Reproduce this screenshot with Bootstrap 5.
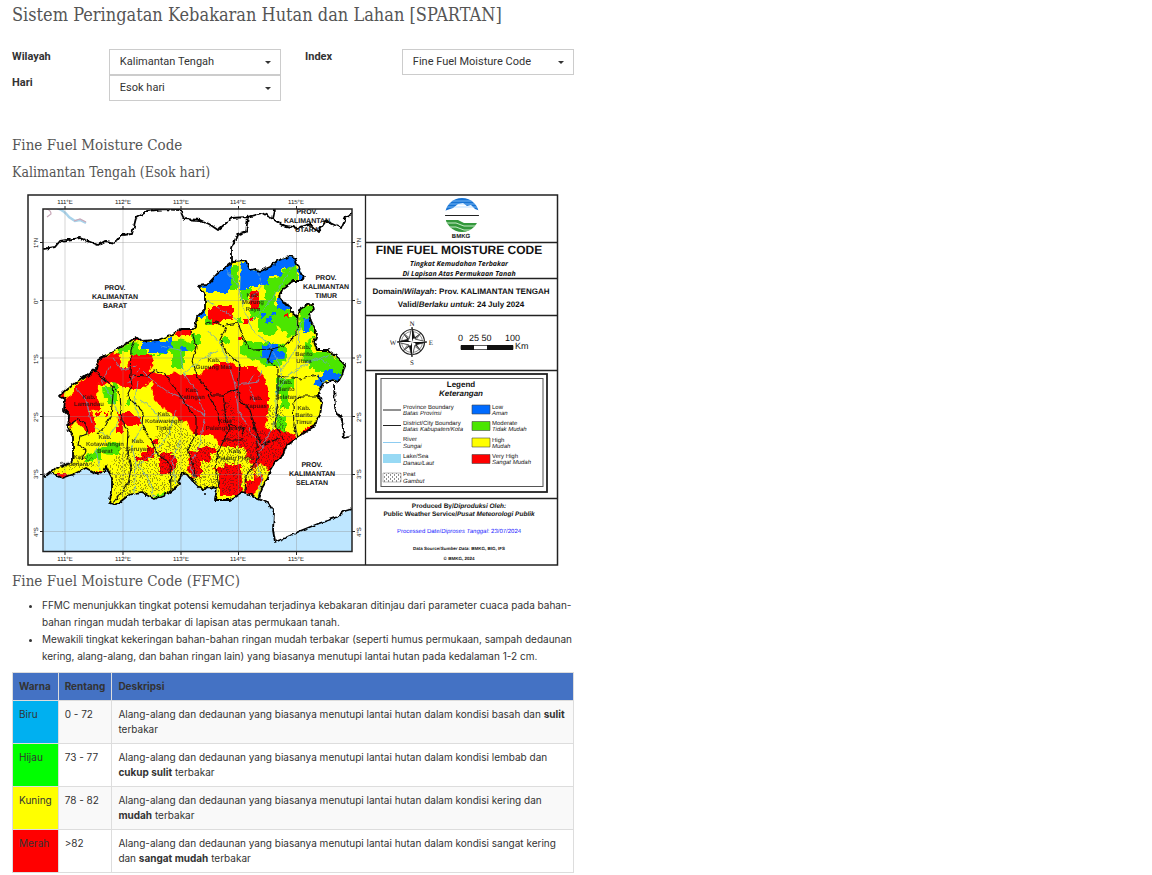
<!DOCTYPE html>
<html lang="id">
<head>
<meta charset="utf-8">
<meta name="viewport" content="width=device-width, initial-scale=1">
<title>Sistem Peringatan Kebakaran Hutan dan Lahan [SPARTAN]</title>
<link href="https://cdn.jsdelivr.net/npm/bootstrap@5.3.0/dist/css/bootstrap.min.css" rel="stylesheet">
<style>
body{font-family:Roboto,"Liberation Sans",sans-serif;font-size:11px;line-height:15px;color:#333;background:#fff}
.spartan{width:50%;min-width:520px;padding:4px 2px 2px 12px}
.spartan h1,.spartan h2,.spartan h3{font-family:"Roboto Slab","DejaVu Serif Condensed","DejaVu Serif",serif;font-weight:400;color:#555;margin:0}
.spartan h1{font-size:18px;line-height:22px;margin-bottom:23px}
.spartan h2{font-size:15px;line-height:20px}
.spartan h3{font-size:14px;line-height:20px;margin-top:7px}
.filters{margin-bottom:34px}
.filter-label{flex:0 0 36%;font-weight:700;line-height:15px}
.filters .form-select{height:26px;padding:0 24px 1px 10px;border:1px solid #ccc;border-radius:0;color:#333;font-size:11px;line-height:15px;
background-image:url("data:image/svg+xml,%3Csvg xmlns='http://www.w3.org/2000/svg' viewBox='0 0 6 3'%3E%3Cpath d='M0 0h6L3 3z' fill='%23333'/%3E%3C/svg%3E");background-size:6px 3px;background-position:right 9px center}
.map-figure{display:block;width:100%;height:auto;margin:6px 0 1px}
.notes,.range-table{font-family:Inter,Roboto,sans-serif;font-size:10px}
.notes{padding-left:30px;line-height:17px;margin:6px 0 7px}
.range-table{line-height:15px;margin:0;color:#333;border-color:#ddd;--bs-table-color:#333;--bs-table-striped-color:#333;--bs-table-striped-bg:#f9f9f9}
.range-table>:not(caption)>*>*{padding:6px;border-color:#ddd;color:#333}
.range-table thead th{background:#4472c4;font-weight:700}
.range-table thead th:nth-child(1){width:45px}
.range-table thead th:nth-child(2){width:53px}
.range-table tbody td.swatch-blue{background:#00b0f0;box-shadow:none}
.range-table tbody td.swatch-green{background:#0f0;box-shadow:none}
.range-table tbody td.swatch-yellow{background:#ff0;box-shadow:none}
.range-table tbody td.swatch-red{background:#f00;box-shadow:none}
.map-figure{text-rendering:geometricPrecision}
.map-figure text{font-family:"Liberation Sans",sans-serif;fill:#111}
.map-figure .grat{font-size:6px}
.map-figure .prov{font-size:7px;font-weight:700;text-anchor:middle}
.map-figure .kab{font-size:6px;font-weight:700;text-anchor:middle;opacity:.75}
.map-figure .mid{text-anchor:middle}
.map-figure .leg{font-size:6px}
.map-figure .bi{font-weight:700;font-style:italic}
.map-figure .it{font-style:italic}
.map-figure .bo{font-weight:700}
.map-figure .subtitle{font-family:"Open Sans",sans-serif;font-size:7px;font-weight:700;font-style:italic}
.map-figure .compass{font-family:"Liberation Serif",serif;font-size:7px}
</style>
</head>
<body>
<main class="spartan">
<h1>Sistem Peringatan Kebakaran Hutan dan Lahan [SPARTAN]</h1>
<form class="filters row gx-4">
<div class="col-6">
<div class="d-flex"><label class="filter-label" for="wilayah">Wilayah</label><select id="wilayah" class="form-select"><option>Kalimantan Tengah</option></select></div>
<div class="d-flex"><label class="filter-label" for="hari">Hari</label><select id="hari" class="form-select"><option>Esok hari</option></select></div>
</div>
<div class="col-6">
<div class="d-flex"><label class="filter-label" for="index">Index</label><select id="index" class="form-select"><option>Fine Fuel Moisture Code</option></select></div>
</div>
</form>
<h2>Fine Fuel Moisture Code</h2>
<h3>Kalimantan Tengah (Esok hari)</h3>

<svg class="map-figure" viewBox="12 188 562 382" role="img" aria-label="Peta Fine Fuel Moisture Code Kalimantan Tengah">
<defs>
<path id="province" d="M230 264L233 262 246 261 250 270 254 269 260 271 270 267 277 261 290 256 295 258 297 265 299 269 304 277 302 281 293 281 285 287 279 296 285 304 291 307 291 312 297 317 299 310 307 305 313 304 314 309 309 314 311 322 317 334 314 342 317 350 328 350 337 357 345 365 342 375 338 382 333 380 323 383 318 395 322 403 320 415 313 427 297 438 285 447 283 455 275 462 270 470 268 478 262 488 258 499 252 495 242 492 230 500 215 500 217 488 207 487 203 491 195 483 190 477 183 473 178 482 180 485 169 493 154 499 141 492 129 495 116 505 109 503 112 492 112 478 106 466 104 472 97 474 86 468 74 474 63 478 51 472 56 468 73 462 73 438 68 428 69 415 64 410 65 399 59 396 68 388 79 380 86 375 83 379 96 369 98 360 106 355 119 348 129 342 136 337 141 341 158 340 173 334 181 329 193 329 195 327 197 317 205 309 205 294 198 286 207 285 217 274Z"/>
<clipPath id="province-clip"><use href="#province"/></clipPath>
<clipPath id="map-clip"><path d="M43 209H352V552H43Z"/></clipPath>
<pattern id="peat" width="4" height="4" patternUnits="userSpaceOnUse"><path d="M0 1h1M2 3h1" stroke="#222" stroke-width="1"/></pattern>
<filter id="rough" color-interpolation-filters="sRGB" filterUnits="userSpaceOnUse" x="12" y="188" width="562" height="382"><feTurbulence type="fractalNoise" baseFrequency=".22" numOctaves="2" seed="4" result="n"/><feDisplacementMap in="SourceGraphic" in2="n" scale="6" xChannelSelector="R" yChannelSelector="G"/></filter>
<filter id="wiggle" color-interpolation-filters="sRGB" filterUnits="userSpaceOnUse" x="12" y="188" width="562" height="382"><feTurbulence type="fractalNoise" baseFrequency=".2" numOctaves="2" seed="9" result="n"/><feDisplacementMap in="SourceGraphic" in2="n" scale="4" xChannelSelector="R" yChannelSelector="G"/></filter>
</defs>
<rect x="28" y="195" width="529.500" height="370" fill="#fff" stroke="#222" stroke-width="1.500"/>
<g clip-path="url(#map-clip)">
<!-- sea -->
<path fill="#bee6ff" d="M43 475L46 476 51 472 63 478 74 474 86 468 97 474 104 472 106 466 112 478 112 492 109 503 116 505 129 495 141 492 154 499 169 493 180 485 178 482 183 473 195 483 203 491 207 487 217 488 215 500 230 500 242 492 252 495 258 499 268 503 274 510 274 530 275 542 280 540 297 532 318 523 340 516 345 511 352 509V552H43Z"/>
<path d="M57 208q8 3 12 9l6 4 5-1 6 3" fill="none" stroke="#a9d3ea" stroke-width="2.500"/>
<path d="M46 209q5 1 5 5l-4 3M74 221l6-2 6 3" fill="none" stroke="#c9a9b9" stroke-width="1.200"/>
<g clip-path="url(#province-clip)">
<rect x="43" y="250" width="309" height="265" fill="#ff0"/>
<g filter="url(#rough)">
<g fill="#4be600">
<path d="M231 266h7v24h-7zM240 288h12v6h-4v6h-8zM265 278h12l6-5 4-10h10v17l-8 4-14 10v12l8 1 7 4v6h8v14h-17l-4-6-2 10h-11v-3h-6v-14h-6v-12h6v-6h8v-10h-1zM250 312h6v6h-6z"/>
<path d="M243 342h30l14 4v14l-10 6h-14l-3-4-12-4-8-4v-8h3zM300 308l11-4 2 12 2 16h-8l-8-4zM305 352h22l20 14-4 14-6 2-6-10h-16v-4h-6v-6h-6zM317 336h-6v16h-6v-10z"/>
<path d="M192 334h9v10h-9zM205 317h9v7h-9zM237 317h5v6h-5zM221 337h8v6h-8zM286 330l10-6v10l-8 4z"/>
<path d="M120 348l6-3 4-4 8 2v6h8v5h20v-13h12v-2l16 4v8h-10v17h-12v-17h-12v4h-30v-4h-8v4h-8zM103 387h9v-5h6v8h-1v14h-9v-6h-4zM101 446h6v-3h13v12h-10l-9-2v6h-8v3h-8v-7l8-2zM126 400h5v4h-5zM154 496l12-4v6l-12 4z"/>
<path d="M276 378h18v10h-5v20h-8v-14h-5zM276 416h10v16h-9z"/>
</g>
<g fill="#006bff">
<path d="M196 280h12l14-18h9v28h-3v3h-7v-1h-14v-4h-10zM241 262h7l6 8 16-3 10-9 17-2v8l-9 4h-6v8h-14v8h-10v3h-12v3h-6zM298 266h8v14h-8zM277 298h8l2 7h5v4h-15zM198 310h7v7h-9zM142 342h26v-6h4v11h-4v6h-20v-4h-6zM181 346h6v5h-6zM304 318h6v15h-6zM262 346h6v-3h10v9h7l-3 7h-8v4h-8v-6h-5zM318 376h6v-6h8v4h8v7l-6-1h-8l-6 6h-6zM266 318h6v5h-6zM271 312h5v4h-5zM261 313h4v4h-4z"/>
</g>
<g fill="#f00">
<path d="M213 306h20v14h-13v5h-8v-6h-4v-11h5zM250 291h9v18h-9zM243 319h5v5h-5zM250 318h3v4h-3zM284 314h4v3h-4zM132 334h8v6h-8zM174 329h17v6h-16zM237 337h4v3h-4z"/>
<path d="M56 396L64 393 66 399 75 392V386L97 368 100 358 117 352 120 357 122 368H128L131 355H150L154 362 148 371 160 374H172L174 371 180 375H200L202 370 210 367 220 362H230L237 367H257L263 375 268 388V415L265 430 280 430 297 436 285 457 262 475 258 462 247 457 245 447H220L213 435H193L187 422 173 415 160 406 154 400 152 388 153 380 143 388H122L120 384 112 382 98 385 97 397 100 405V410L90 411 95 418V432H88L77 422 70 428 60 415Z"/>
<path d="M300 432l14-8v6l-14 8zM117 413h16v4h8v8h-18v7h-8v-5h4zM104 412h4v3h-4zM96 412h5v3h-5zM138 365h8v8h-8z"/>
<path d="M190 451h8v-3h12v14h-9v16l-10-2-4-8zM160 452h12v4h4v10l-6 8h-10zM148 447h6v10h-6v4h-12v-4h5v-5h7zM206 447h10v6h-10zM220 472h22v24h-22zM213 468h12v-4h16v8h-26zM246 480h8v-8l-4-12 16-10-4 30-12 20-6-6zM50 474h18v6h-18zM94 472h8v4h-8zM152 440h6v4h-6z"/>
</g>
<path fill="#ff0" d="M241 470h6v10h-5zM254 468l6-4 8 4-4 6-8 4zM218 453h14v4h-14zM217 361h3v4h-3z"/>
</g>
<g filter="url(#rough)" opacity=".85">
<path fill="url(#peat)" d="M58 464L92 454 98 468 112 462 120 446 146 456 154 440 168 420 182 424 192 436 224 446 222 410 230 396 236 420 265 432 275 430 292 436 284 456 258 480 242 492 218 494 202 490 184 472 176 488 116 500 108 464 58 472zM266 405h20v30h-18z"/>
</g>
<!-- rivers -->
<g fill="none" stroke="#68a4c8" stroke-width=".8" filter="url(#wiggle)">
<path d="M258 496L262 480 256 462 262 448 250 430 238 410 235 385 229 365 221 345 208 330M262 448L276 420 276 395 282 370 270 345 252 330 244 310 238 285 226 270M252 320L268 305 284 280 292 266M276 395L288 375 310 362 332 355M282 370L298 345 300 325 309 315"/>
<path d="M197 482L190 465 200 444 205 415 196 390 184 374 180 350 160 346M187 400L168 392 152 380 140 368 128 384M205 415L182 402M184 374L200 360 218 350M238 385L258 382 262 370M255 402L248 384 254 374"/>
<path d="M100 470L96 450 108 438 120 420 112 398 102 382 110 366M134 492L136 465 132 445 143 425 134 405 138 382M154 497L148 478 138 465 156 452 168 435 176 410M108 438L92 424 86 400 76 388M176 488L172 460 180 440"/>
<path d="M237 320L222 310 206 300M250 300L262 285 258 272M140 400L152 408 160 422M113 358L122 370 136 366M330 366L318 358 306 362"/>
</g>
</g>
<!-- district boundaries -->
<g fill="none" stroke="#111" stroke-width="1.100" filter="url(#wiggle)">
<path d="M136 338L131 350 130 375 132 385 127 396 143 412 142 425 151 440 158 455 170 463 171 490M95 371L105 380 112 385 113 395 111 415 106 425 98 434M112 385L120 395 122 420 128 432 127 450 131 468 128 484 112 504M69 425L78 419 86 424 88 434 80 436 78 445 86 450 82 460M131 375L148 376 154 370 165 374 178 392 188 408 196 418V434L188 448 194 470 196 482"/>
<path d="M192 331L196 347 192 362 198 378 204 385 212 395 223 395 238 389 240 365 226 352 220 340 226 328 216 322 205 324M226 325L238 323 246 345 252 350 272 349 286 345 297 334 298 317M272 349L268 361 278 368 278 400 275 425 284 440M278 376L300 379 318 375 323 383M223 394L226 420 230 428 224 440H241L244 428 229 425M238 389L240 400 250 410 256 430 258 458 246 476 245 493M224 440L219 450 216 468 219 488M208 395L218 412 219 425M319 396L300 396 293 404 294 426 297 438M254 427L262 445 280 438"/>
</g>
<!-- graticule -->
<path d="M65 209V552M123 209V552M181 209V552M238.500 209V552M296.500 209V552M43 242.500H352M43 300.500H352M43 358H352M43 416.500H352M43 474.500H352M43 531.500H352" stroke="#888" stroke-width=".6" opacity=".6" fill="none"/>
<g fill="none" stroke="#000" stroke-linejoin="round">
<use href="#province" stroke-width="1.800" filter="url(#wiggle)"/>
<path stroke-width="1.800" filter="url(#wiggle)" d="M43 249L55 247 60 241 80 238 93 243 98 245 105 241 115 243 122 235 132 234 136 218 148 211 164 209 180 210 184 219 200 220 209 224 218 230 232 218 247 217 252 216 262 213 273 219 282 225 297 228 310 224 318 232 326 221 341 228 346 217 352 214M273 219L275 209M248 217L246 232 237 235 232 248 232 262M334 385L335 408 342 420 344 438 352 436M43 475L46 476 51 472M258 499L268 503 274 512 273 530 275 542 285 538 300 531 320 523 338 517 345 511 352 509"/>
</g>
<circle cx="205" cy="494" r="1"/>
<g class="prov">
<text x="115" y="290">PROV.</text><text x="115" y="299">KALIMANTAN</text><text x="115" y="308">BARAT</text>
<text x="307" y="214">PROV.</text><text x="307" y="223">KALIMANTAN</text><text x="307" y="232">UTARA</text>
<text x="326" y="280">PROV.</text><text x="326" y="289">KALIMANTAN</text><text x="326" y="298">TIMUR</text>
<text x="312" y="467">PROV.</text><text x="312" y="476">KALIMANTAN</text><text x="312" y="485">SELATAN</text>
</g>
<g class="kab">
<text x="253" y="297">Kab.</text><text x="253" y="304">Murung</text><text x="253" y="311">Raya</text>
<text x="304" y="349">Kab.</text><text x="304" y="356">Barito</text><text x="304" y="363">Utara</text>
<text x="214" y="362">Kab.</text><text x="214" y="369">Gunung Mas</text>
<text x="89" y="399">Kab.</text><text x="89" y="406">Lamandau</text>
<text x="192" y="392">Kab.</text><text x="192" y="399">Katingan</text>
<text x="256" y="400">Kab.</text><text x="256" y="408">Kapuas</text>
<text x="286" y="384">Kab.</text><text x="286" y="391">Barito</text><text x="286" y="399">Selatan</text>
<text x="304" y="410">Kab.</text><text x="304" y="417">Barito</text><text x="304" y="424">Timur</text>
<text x="164" y="416">Kab.</text><text x="164" y="423">Kotawaringin</text><text x="164" y="430">Timur</text>
<text x="105" y="439">Kab.</text><text x="105" y="446">Kotawaringin</text><text x="105" y="453">Barat</text>
<text x="138" y="443">Kab.</text><text x="138" y="451">Seruyan</text>
<text x="225" y="423">Kota</text><text x="225" y="430">Palangkaraya</text>
<text x="235" y="453">Kab.</text><text x="235" y="460">Pulang Pisau</text>
<text x="80" y="459">Kab.</text><text x="74" y="466">Sukamara</text>
</g>
</g>
<rect x="43" y="209" width="309" height="342.500" fill="none" stroke="#222" stroke-width="1.500"/>
<path d="M65 206v3M123 206v3M181 206v3M238.500 206v3M296.500 206v3M65 552v3M123 552v3M181 552v3M238.500 552v3M296.500 552v3M40 242.500h3M40 300.500h3M40 358h3M40 416.500h3M40 474.500h3M40 531.500h3M352 242.500h3M352 300.500h3M352 358h3M352 416.500h3M352 474.500h3M352 531.500h3" stroke="#222" fill="none"/>
<g class="grat mid">
<text x="65" y="204">111°E</text><text x="123" y="204">112°E</text><text x="181" y="204">113°E</text><text x="238" y="204">114°E</text><text x="296" y="204">115°E</text>
<text x="65" y="561">111°E</text><text x="123" y="561">112°E</text><text x="181" y="561">113°E</text><text x="238" y="561">114°E</text><text x="296" y="561">115°E</text>
<g><text transform="translate(38 243) rotate(-90)">1°N</text><text transform="translate(38 301) rotate(-90)">0°</text><text transform="translate(38 359) rotate(-90)">1°S</text><text transform="translate(38 417) rotate(-90)">2°S</text><text transform="translate(38 474) rotate(-90)">3°S</text><text transform="translate(38 532) rotate(-90)">4°S</text></g>
<g><text transform="translate(361 243) rotate(-90)">1°N</text><text transform="translate(361 301) rotate(-90)">0°</text><text transform="translate(361 359) rotate(-90)">1°S</text><text transform="translate(361 417) rotate(-90)">2°S</text><text transform="translate(361 474) rotate(-90)">3°S</text><text transform="translate(361 532) rotate(-90)">4°S</text></g>
</g>
<path d="M365.500 195V565M365 242.500H558M365 278.500H558M365 315.500H558M365 370.500H558M365 498.500H558" stroke="#222" stroke-width="1.300" fill="none"/>
<!-- BMKG emblem -->
<clipPath id="emblem-clip"><ellipse cx="462" cy="215" rx="17" ry="17"/></clipPath>
<g clip-path="url(#emblem-clip)">
<path fill="#1673d4" d="M444 198h36v13l-5-2-4-4-4 1-4-3-5 1-5 4-9 3z"/>
<path d="M444 201h36M444 204h36M444 207h36" stroke="#9fd0ff" stroke-width=".7"/>
<path d="M444 215.500h36" stroke="#222"/>
<path fill="#34983c" d="M444 220h14l6 3h16v10h-36z"/>
<path d="M444 223l12 0 8 3h16M444 227h12l8 3h16" stroke="#c6ecc8" fill="none"/>
</g>
<text class="mid bo" x="461" y="238" font-size="6">BMKG</text>
<g class="mid">
<text x="459" y="254" class="bo" font-size="12">FINE FUEL MOISTURE CODE</text>
<text x="459" y="266" class="subtitle">Tingkat Kemudahan Terbakar</text><text x="459" y="276" class="subtitle">Di Lapisan Atas Permukaan Tanah</text>
<text x="461" y="294" class="bo" font-size="8">Domain/<tspan font-style="italic">Wilayah</tspan>: Prov. KALIMANTAN TENGAH</text>
<text x="461" y="307" class="bo" font-size="8">Valid/<tspan font-style="italic">Berlaku untuk</tspan>: 24 July 2024</text>
</g>
<!-- compass rose -->
<g transform="translate(412 342)">
<circle r="12.500" fill="none" stroke="#222" stroke-width="1.200"/><circle r="10.500" fill="none" stroke="#444" stroke-width=".6"/>
<path fill="#fff" stroke="#222" stroke-width=".6" d="M-9-9L-1-3 0 0-3-1ZM9-9L1-3 0 0 3-1ZM9 9L1 3 0 0 3 1ZM-9 9L-1 3 0 0-3 1Z"/>
<path fill="#fff" stroke="#111" stroke-width=".7" d="M0-15L3-3 15 0 3 3 0 15-3 3-15 0-3-3Z"/>
<path fill="#111" d="M0-15V0L3-3ZM15 0H0L3 3ZM0 15V0L-3 3ZM-15 0H0L-3-3ZM-9-9L0 0-3-1ZM9-9L0 0 1-3ZM9 9L0 0 3 1ZM-9 9L0 0-1 3Z"/>
</g>
<g class="mid"><text class="compass" x="412" y="326">N</text><text class="compass" x="412" y="365">S</text><text class="compass" x="393" y="345">W</text><text class="compass" x="431" y="345">E</text></g>
<g font-size="9"><text x="458" y="341">0</text><text x="469" y="341">25 50</text><text x="505" y="341">100</text><text x="515" y="349">Km</text></g>
<path fill="#fff" stroke="#111" stroke-width=".7" d="M461 345.500h52v4h-52z"/><path fill="#111" d="M461 345h13v5h-13zM487 345h26v5h-26z"/>
<!-- legend -->
<rect x="376" y="374" width="171" height="118" fill="#fff" stroke="#222" stroke-width="1.800"/><rect x="381" y="378.500" width="162" height="108" fill="none" stroke="#555" stroke-width="1"/>
<text class="mid bo" x="461" y="387" font-size="8">Legend</text><text class="mid bi" x="461" y="396" font-size="8">Keterangan</text>
<path d="M383 410h18M383 425.500h18" stroke="#222"/><path d="M383 442.500h18" stroke="#8dccf1"/>
<path fill="#97d9f4" d="M383 454h18v9h-18z"/><path fill="url(#peat)" stroke="#777" stroke-width=".5" d="M383 473h18v9h-18z"/>
<g stroke="#444" stroke-width=".6"><path fill="#006bff" d="M472 405h18v9h-18z"/><path fill="#4be600" d="M472 421.500h18v9h-18z"/><path fill="#ff0" d="M472 438h18v9h-18z"/><path fill="#f00" d="M472 454.500h18v9h-18z"/></g>
<g class="leg">
<text x="403" y="409">Province Boundary</text><text x="403" y="415" class="it">Batas Provinsi</text>
<text x="403" y="425">District/City Boundary</text><text x="403" y="431" class="it">Batas Kabupaten/Kota</text>
<text x="403" y="441">River</text><text x="403" y="448" class="it">Sungai</text>
<text x="403" y="458">Lake/Sea</text><text x="403" y="465" class="it">Danau/Laut</text>
<text x="403" y="476">Peat</text><text x="403" y="483" class="it">Gambut</text>
<text x="492" y="409">Low</text><text x="492" y="415" class="it">Aman</text>
<text x="492" y="425">Moderate</text><text x="492" y="431" class="it">Tidak Mudah</text>
<text x="492" y="442">High</text><text x="492" y="448" class="it">Mudah</text>
<text x="492" y="458">Very High</text><text x="492" y="464" class="it">Sangat Mudah</text>
</g>
<g class="mid">
<text x="459" y="508" class="bo" font-size="6.500">Produced By/<tspan font-style="italic">Diproduksi Oleh:</tspan></text>
<text x="459" y="516" class="bo" font-size="6.500">Public Weather Service/<tspan font-style="italic">Pusat Meteorologi Publik</tspan></text>
<text x="459" y="533" font-size="6" style="fill:#22f">Processed Date/<tspan font-style="italic">Diproses Tanggal</tspan>: 23/07/2024</text>
<text x="459" y="550" class="bo" font-size="4.500">Data Source/<tspan font-style="italic">Sumber Data</tspan>: BMKG, BIG, IFS</text>
<text x="459" y="560" class="bo" font-size="4.500">© BMKG, 2024</text>
</g>
</svg>

<h2>Fine Fuel Moisture Code (FFMC)</h2>
<ul class="notes">
<li>FFMC menunjukkan tingkat potensi kemudahan terjadinya kebakaran ditinjau dari parameter cuaca pada bahan-bahan ringan mudah terbakar di lapisan atas permukaan tanah.</li>
<li>Mewakili tingkat kekeringan bahan-bahan ringan mudah terbakar (seperti humus permukaan, sampah dedaunan kering, alang-alang, dan bahan ringan lain) yang biasanya menutupi lantai hutan pada kedalaman 1-2 cm.</li>
</ul>
<table class="table table-bordered table-striped range-table">
<thead><tr><th scope="col">Warna</th><th scope="col">Rentang</th><th scope="col">Deskripsi</th></tr></thead>
<tbody>
<tr><td class="swatch-blue">Biru</td><td>0 - 72</td><td>Alang-alang dan dedaunan yang biasanya menutupi lantai hutan dalam kondisi basah dan <strong>sulit</strong> terbakar</td></tr>
<tr><td class="swatch-green">Hijau</td><td>73 - 77</td><td>Alang-alang dan dedaunan yang biasanya menutupi lantai hutan dalam kondisi lembab dan <strong>cukup sulit</strong> terbakar</td></tr>
<tr><td class="swatch-yellow">Kuning</td><td>78 - 82</td><td>Alang-alang dan dedaunan yang biasanya menutupi lantai hutan dalam kondisi kering dan <strong>mudah</strong> terbakar</td></tr>
<tr><td class="swatch-red">Merah</td><td>&gt;82</td><td>Alang-alang dan dedaunan yang biasanya menutupi lantai hutan dalam kondisi sangat kering dan <strong>sangat mudah</strong> terbakar</td></tr>
</tbody>
</table>
</main>
<script src="https://cdn.jsdelivr.net/npm/bootstrap@5.3.0/dist/js/bootstrap.bundle.min.js"></script>
</body>
</html>
